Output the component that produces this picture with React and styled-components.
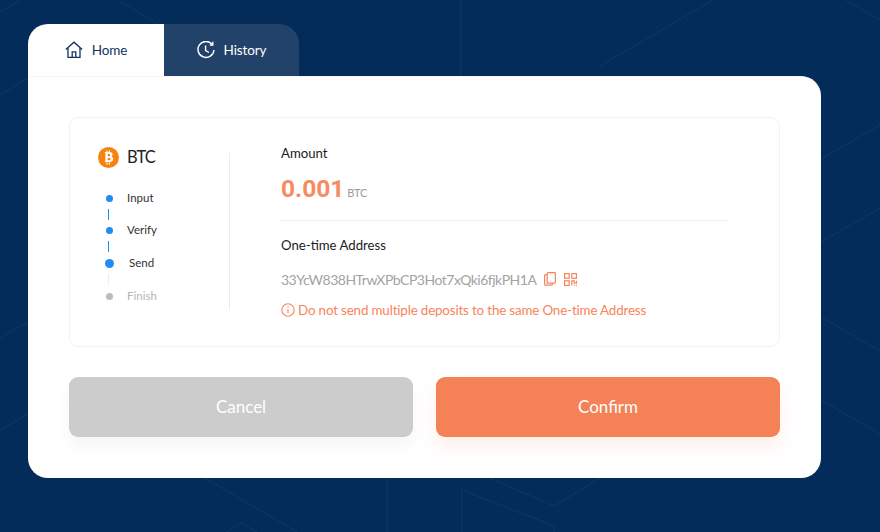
import styled, { createGlobalStyle } from "styled-components";

const GlobalStyle = createGlobalStyle`
  html, body {
    margin: 0;
    padding: 0;
    background: #042c5a;
  }
  * {
    box-sizing: border-box;
  }
`;

const Page = styled.div`
  position: relative;
  width: 880px;
  height: 532px;
  overflow: hidden;
  padding: 24px 0 0 28px;
  font-family: "Lato", sans-serif;
  background: #042c5a;
`;

const Backdrop = styled.svg`
  position: absolute;
  top: 0;
  left: 0;
`;

const Shell = styled.div`
  position: relative;
  width: 793px;
`;

const Tabs = styled.div`
  display: flex;
  height: 52px;
`;

const Tab = styled.div`
  display: flex;
  align-items: center;
  justify-content: center;
  gap: 9px;
  font-size: 13.5px;
  letter-spacing: -0.1px;
  width: ${props => (props.$active ? "136px" : "135px")};
  background: ${props => (props.$active ? "#fff" : "#234269")};
  color: ${props => (props.$active ? "#0f3563" : "#fff")};
  border-radius: ${props => (props.$active ? "20px 0 0 0" : "0 20px 0 0")};
  padding-bottom: 1px;
`;

const Card = styled.div`
  height: 402px;
  background: #fff;
  border-radius: 0 20px 20px 20px;
  padding: 40px 41px 0;
  border-top: 1px solid #f5f5f6;
`;

const Panel = styled.div`
  display: flex;
  width: 711px;
  height: 230px;
  border: 1px solid #f3f3f4;
  border-radius: 10px;
`;

const Sidebar = styled.div`
  width: 160px;
  margin-top: 35px;
  height: 157px;
  padding-left: 28px;
  border-right: 1px solid #ececec;
`;

const Coin = styled.div`
  display: flex;
  align-items: center;
  gap: 8px;
  font-size: 16.5px;
  letter-spacing: -0.9px;
  color: #222;
  height: 20px;
  margin-top: -6px;
  margin-bottom: 14px;
`;

const Steps = styled.div`
  display: flex;
  flex-direction: column;
`;

const Step = styled.div`
  position: relative;
  display: flex;
  align-items: center;
  height: 32.6px;
  font-size: 11.5px;
  color: ${props => (props.$pending ? "#b4b4b4" : "#333")};
`;

const DotSlot = styled.div`
  position: relative;
  width: 22px;
  display: flex;
  justify-content: center;
  margin-right: ${props => (props.$current ? "9px" : "7px")};
`;

const Dot = styled.span`
  display: block;
  margin-top: 2px;
  width: ${props => (props.$current ? "9px" : "7px")};
  height: ${props => (props.$current ? "9px" : "7px")};
  border-radius: 50%;
  background: ${props => (props.$pending ? "#bbb" : "#1f8bf3")};
`;

const Connector = styled.span`
  position: absolute;
  left: 10px;
  top: -5px;
  width: 1px;
  height: 11px;
  background: ${props => (props.$pending ? "#ececec" : "#1f8bf3")};
`;

const Details = styled.div`
  flex: 1;
  padding: 26px 51px 0 51px;
`;

const Label = styled.div`
  font-size: 13.2px;
  line-height: 18px;
  color: #1c1c1c;
`;

const Amount = styled.div`
  display: flex;
  align-items: baseline;
  gap: 3px;
  margin-top: 12px;
  padding-bottom: 12px;
  margin-bottom: 15px;
  border-bottom: 1px solid #eeeeee;
  color: #f78a5f;
  font-family: "Roboto", sans-serif;
  font-weight: 700;
  font-size: 24.5px;
  line-height: 30px;
`;

const Unit = styled.span`
  font-family: "Lato", sans-serif;
  font-weight: 400;
  font-size: 11px;
  letter-spacing: -0.2px;
  color: #9b9b9b;
`;

const AddressRow = styled.div`
  display: flex;
  align-items: center;
  gap: 8px;
  margin-top: 15px;
  height: 20px;
  font-size: 14px;
  letter-spacing: -0.5px;
  color: #a3a3a3;
`;

const Warning = styled.div`
  display: flex;
  align-items: center;
  gap: 3px;
  margin-top: 12px;
  font-size: 13.4px;
  letter-spacing: -0.17px;
  line-height: 18px;
  color: #f7855a;
  white-space: nowrap;
`;

const Actions = styled.div`
  display: flex;
  gap: 23px;
  margin-top: 30px;
  width: 711px;
`;

const ActionButton = styled.div`
  display: flex;
  align-items: center;
  justify-content: center;
  width: 344px;
  height: 60px;
  padding-bottom: 2px;
  border-radius: 9px;
  font-size: 17px;
  color: #fff;
  background: ${props => (props.$primary ? "#f58156" : "#cccccc")};
  box-shadow: 0 10px 18px ${props => (props.$primary ? "rgba(245,128,85,0.12)" : "rgba(0,0,0,0.04)")};
`;

function HomeIcon() {
  return (
    <svg width="18" height="18" viewBox="0 0 18 18" fill="none" stroke="#0f3563" strokeWidth="1.3">
      <path d="M0.8 8.6 9 1.2l8.2 7.4" />
      <path d="M3 7v9.3h12V7" />
      <path d="M7.2 16.3v-5.4h3.6v5.4" />
    </svg>
  );
}

function ClockIcon() {
  return (
    <svg width="18" height="18" viewBox="0 0 18 18" fill="none" stroke="#fff" strokeWidth="1.4">
      <path d="M15.4 3.6A8 8 0 1 0 17 9" />
      <path d="M15.8 0.8v3.2h-3" />
      <path d="M8.6 4.5v5l3.4 2" />
    </svg>
  );
}

function BitcoinIcon() {
  return (
    <svg width="21" height="21" viewBox="0 0 21 21">
      <circle cx="10.5" cy="10.5" r="10.5" fill="#f7830f" />
      <path
        d="M6.6 5h5c1.9 0 3 1 3 2.5 0 1-.5 1.8-1.4 2.1 1.2.3 2 1.2 2 2.5 0 1.8-1.3 2.9-3.3 2.9H6.6l.8-1.6V6.6z M9.7 7.1v2.1h1.4c.7 0 1.1-.4 1.1-1s-.4-1.1-1.1-1.1z M9.7 10.9v2.4h1.7c.8 0 1.2-.5 1.2-1.2s-.5-1.2-1.2-1.2z"
        fill="#fff"
        fillRule="evenodd"
      />
      <path d="M9 3.4v2M11.4 3.4v2M9 15.4v2M11.4 15.4v2" stroke="#fff" strokeWidth="1.2" />
    </svg>
  );
}

function CopyIcon() {
  return (
    <svg width="12" height="14" viewBox="0 0 12 14" fill="none" stroke="#f7855a" strokeWidth="1.2">
      <path d="M3.2 2.6H1.6a1 1 0 0 0-1 1v8.6a1 1 0 0 0 1 1h5.8a1 1 0 0 0 1-1v-1" />
      <path d="M3.2 1.6a1 1 0 0 1 1-1h6.2a1 1 0 0 1 1 .9v8.7a1 1 0 0 1-1 1H3.2z" />
    </svg>
  );
}

function QrCodeIcon() {
  return (
    <svg width="13" height="13" viewBox="0 0 13 13" fill="none" stroke="#f7855a" strokeWidth="1.2">
      <rect x="0.6" y="0.6" width="4.6" height="4.6" />
      <rect x="7.8" y="0.6" width="4.6" height="4.6" />
      <rect x="0.6" y="7.8" width="4.6" height="4.6" />
      <path d="M7.8 12.6V7.8h2.4v2.4h2.4V7.8M10 12.4h1M12 12.4h.8" />
    </svg>
  );
}

function InfoIcon() {
  return (
    <svg width="14" height="14" viewBox="0 0 14 14" fill="none" stroke="#f7855a" strokeWidth="1.1">
      <circle cx="7" cy="7" r="6.2" />
      <path d="M7 6v4.2M7 3.6v1.2" />
    </svg>
  );
}

const steps = [
  { name: "Input" },
  { name: "Verify" },
  { name: "Send", current: true },
  { name: "Finish", pending: true },
];

export default function App() {
  return (
    <Page>
      <GlobalStyle />
      <Backdrop width="880" height="532" viewBox="0 0 880 532" fill="none" stroke="#113863" strokeWidth="1">
        <path d="M0 12 21 0M118 0l40 24M461 0v76M600 66 713 0M846 0l34 20" />
        <path d="M821 159l59-34M821 242l59-34M821 317l59 34M821 400l59 34" />
        <path d="M0 95l28-17M0 338l28-16M0 430l28-16" />
        <path d="M205 478l92 54M226 532l15-9 16 9M387 478v54" />
        <path d="M490 478l64 28 46-28M462 532v-42l92 36v6" />
      </Backdrop>
      <Shell>
        <Tabs>
          <Tab $active>
            <HomeIcon />
            Home
          </Tab>
          <Tab>
            <ClockIcon />
            History
          </Tab>
        </Tabs>
        <Card>
          <Panel>
            <Sidebar>
              <Coin>
                <BitcoinIcon />
                BTC
              </Coin>
              <Steps>
                {steps.map((step, i) => (
                  <Step key={step.name} $pending={step.pending}>
                    {i > 0 && <Connector $pending={step.pending} />}
                    <DotSlot $current={step.current}>
                      <Dot $current={step.current} $pending={step.pending} />
                    </DotSlot>
                    {step.name}
                  </Step>
                ))}
              </Steps>
            </Sidebar>
            <Details>
              <Label>Amount</Label>
              <Amount>
                0.001 <Unit>BTC</Unit>
              </Amount>
              <Label>One-time Address</Label>
              <AddressRow>
                33YcW838HTrwXPbCP3Hot7xQki6fjkPH1A
                <CopyIcon />
                <QrCodeIcon />
              </AddressRow>
              <Warning>
                <InfoIcon />
                Do not send multiple deposits to the same One-time Address
              </Warning>
            </Details>
          </Panel>
          <Actions>
            <ActionButton>Cancel</ActionButton>
            <ActionButton $primary>Confirm</ActionButton>
          </Actions>
        </Card>
      </Shell>
    </Page>
  );
}
